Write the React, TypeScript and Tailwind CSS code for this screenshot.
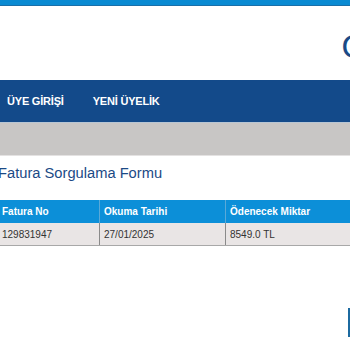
import React from "react";

export default function App() {
  return (
    <div className="w-[350px] h-[350px] overflow-hidden bg-white relative" style={{ fontFamily: '"Liberation Sans", Arial, sans-serif' }}>
      <div className="h-[5px] bg-[#0a8ad2]" />
      <div className="h-px bg-[#1a6fa8]" />
      <div className="h-[74px] flex items-center justify-end overflow-hidden">
        <span className="text-[34px] leading-none text-[#1b4a86] mr-[-18px] mt-[6px]">O</span>
      </div>
      <div className="h-[42px] bg-[#134a8a] flex items-center text-white text-[11px] font-bold tracking-[-0.2px]">
        <span className="ml-[7px]">ÜYE GİRİŞİ</span>
        <span className="ml-[29px]">YENİ ÜYELİK</span>
      </div>
      <div className="h-px bg-[#b8c6d4]" />
      <div className="h-[32px] bg-[#c8c6c5]" />
      <div className="h-px bg-[#e4e2e2]" />
      <div className="pt-[7px]">
        <div className="text-[14.7px] leading-[20px] text-[#1b4a86] ml-[-2px]">Fatura Sorgulama Formu</div>
      </div>
      <div className="mt-[17px] w-[350px]">
        <div className="flex h-[23px] bg-[#0c8fd8] text-white text-[10px] font-bold items-center">
          <div className="w-[99px] pl-[2px]">Fatura No</div>
          <div className="w-px self-stretch bg-[#5aa9d8]" />
          <div className="w-[125px] pl-[4px]">Okuma Tarihi</div>
          <div className="w-px self-stretch bg-[#5aa9d8]" />
          <div className="flex-1 pl-[4px]">Ödenecek Miktar</div>
        </div>
        <div className="flex h-[23px] bg-[#e9e5e5] text-[#333] text-[10px] items-center border-b border-[#a8a8a8]">
          <div className="w-[99px] pl-[2px]">129831947</div>
          <div className="w-px self-stretch bg-[#8a8a8a]" />
          <div className="w-[125px] pl-[4px]">27/01/2025</div>
          <div className="w-px self-stretch bg-[#8a8a8a]" />
          <div className="flex-1 pl-[4px]">8549.0 TL</div>
        </div>
      </div>
      <div className="absolute right-0 top-[308px] w-[2px] h-[29px] bg-[#1c6aa0]" />
    </div>
  );
}
